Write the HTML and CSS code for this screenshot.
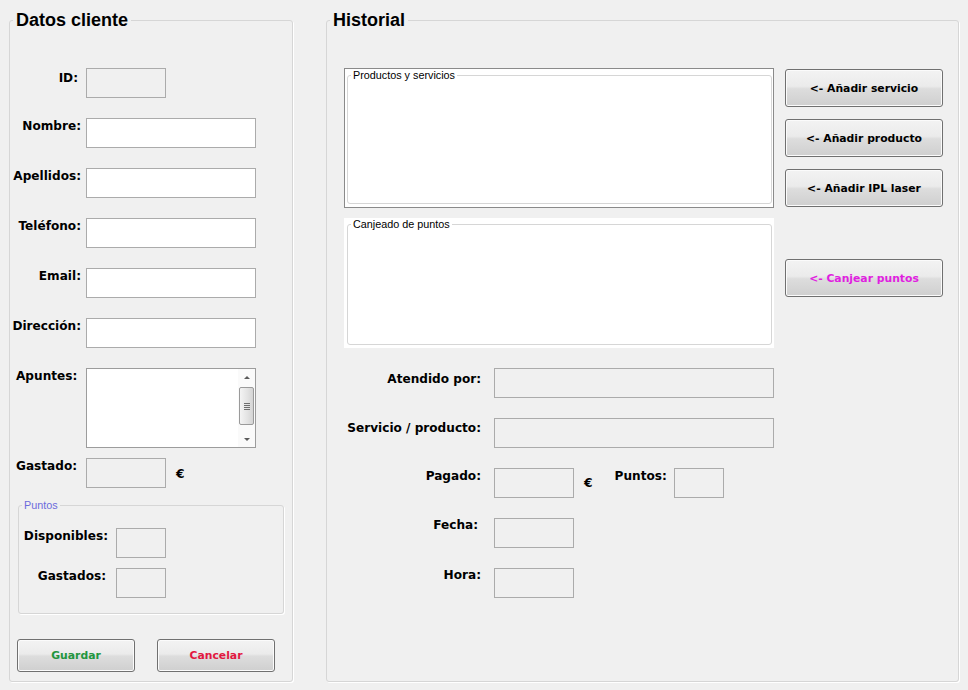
FILE: index.html
```html
<!DOCTYPE html>
<html lang="es">
<head>
<meta charset="utf-8">
<title>Cliente</title>
<link rel="stylesheet" href="styles.css">
</head>
<body>
<div class="window">
  <fieldset class="group group-client">
    <legend class="group-title">Datos cliente</legend>
    <div class="client-form">
      <div class="row"><span class="lbl lbl-id">ID:</span><input class="field w80" disabled></div>
      <div class="row"><span class="lbl">Nombre:</span><input class="field w170"></div>
      <div class="row"><span class="lbl">Apellidos:</span><input class="field w170"></div>
      <div class="row"><span class="lbl">Teléfono:</span><input class="field w170"></div>
      <div class="row"><span class="lbl">Email:</span><input class="field w170"></div>
      <div class="row"><span class="lbl">Dirección:</span><input class="field w170"></div>
      <div class="row row-notes"><span class="lbl lbl-left">Apuntes:</span>
        <div class="notes">
          <div class="scrollbar">
            <div class="sb-arrow"><span class="tri-up"></span></div>
            <div class="sb-thumb"><span class="grip"></span></div>
            <div class="sb-track"></div>
            <div class="sb-arrow"><span class="tri-down"></span></div>
          </div>
        </div>
      </div>
      <div class="row row-spent"><span class="lbl lbl-left">Gastado:</span><input class="field w80" disabled><span class="euro">€</span></div>

      <fieldset class="points">
        <legend class="small-title points-title">Puntos</legend>
        <div class="points-body">
          <div class="row"><span class="lbl">Disponibles:</span><input class="field w50" disabled></div>
          <div class="row"><span class="lbl lbl-used">Gastados:</span><input class="field w50" disabled></div>
        </div>
      </fieldset>

      <div class="actions">
        <button class="btn btn-action btn-save">Guardar</button>
        <button class="btn btn-action btn-cancel">Cancelar</button>
      </div>
    </div>
  </fieldset>

  <fieldset class="group group-history">
    <legend class="group-title">Historial</legend>
    <div class="history-top">
      <div class="lists">
        <div class="list list-framed">
          <fieldset class="inner">
            <legend class="small-title">Productos y servicios</legend>
          </fieldset>
        </div>
        <div class="list list-plain">
          <fieldset class="inner">
            <legend class="small-title">Canjeado de puntos</legend>
          </fieldset>
        </div>
      </div>
      <div class="side-buttons">
        <button class="btn btn-side">&lt;- Añadir servicio</button>
        <button class="btn btn-side">&lt;- Añadir producto</button>
        <button class="btn btn-side">&lt;- Añadir IPL laser</button>
        <button class="btn btn-side btn-redeem">&lt;- Canjear puntos</button>
      </div>
    </div>
    <div class="history-form">
      <div class="row"><span class="lbl pt4">Atendido por:</span><input class="field w280" disabled></div>
      <div class="row"><span class="lbl pt3">Servicio / producto:</span><input class="field w280" disabled></div>
      <div class="row"><span class="lbl">Pagado:</span><input class="field w80" disabled><span class="euro euro-paid">€</span><span class="lbl lbl-points">Puntos:</span><input class="field w50" disabled></div>
      <div class="row"><span class="lbl pt0 lbl-date">Fecha:</span><input class="field w80" disabled></div>
      <div class="row"><span class="lbl pt0">Hora:</span><input class="field w80" disabled></div>
    </div>
  </fieldset>
</div>
</body>
</html>
```

FILE: styles.css
```css
* { box-sizing: border-box; }

html, body {
  margin: 0;
  padding: 0;
  background: #f0f0f0;
}

body {
  width: 968px;
  height: 690px;
  overflow: hidden;
  font-family: "DejaVu Sans", sans-serif;
  color: #000;
}

.window {
  display: flex;
  gap: 33px;
  padding: 10px 0 0 9px;
}

/* Group boxes */
.group {
  margin: 0;
  padding: 0;
  min-width: 0;
  height: 672px;
  border: 1px solid #d6d6d6;
  border-radius: 3px;
  box-shadow: 1px 1px 0 #ffffff;
}

.group-client { width: 284px; }
.group-history { width: 633px; }

.group-title {
  margin-left: 3px;
  padding: 0 3px;
  font: bold 18px/20px "Liberation Sans", Arial, sans-serif;
}

.small-title {
  margin-left: 3px;
  padding: 0 2px;
  font: 10.8px/13px "Liberation Sans", Arial, sans-serif;
  color: #000;
}

/* Rows, labels, fields */
.row {
  display: flex;
  align-items: flex-start;
  height: 30px;
  margin-bottom: 20px;
}

.lbl {
  flex: none;
  font-weight: bold;
  font-size: 12.1px;
  line-height: 15px;
  padding-top: 1px;
  white-space: nowrap;
}

.field {
  display: block;
  flex: none;
  height: 30px;
  margin: 0;
  padding: 0 3px;
  border: 1px solid #ababab;
  background: #ffffff;
  outline: none;
  font: 12px "DejaVu Sans", sans-serif;
}

.field[disabled] { background: #f0f0f0; }

.w50 { width: 50px; }
.w80 { width: 80px; }
.w170 { width: 170px; }
.w280 { width: 280px; }

.euro {
  flex: none;
  margin-left: 10px;
  padding-top: 9px;
  font-weight: bold;
  font-size: 12.3px;
  line-height: 15px;
}

/* Left form */
.client-form { padding-top: 38px; }

.client-form .lbl {
  width: 76px;
  text-align: right;
  padding-right: 5px;
}

.client-form .lbl.lbl-id { padding-right: 8px; padding-top: 3px; }

.client-form .lbl.lbl-left {
  text-align: left;
  padding-left: 6px;
  padding-right: 0;
}

.row-notes { height: 80px; margin-bottom: 10px; }
.row-spent { margin-bottom: 11px; }

.notes {
  flex: none;
  width: 170px;
  height: 80px;
  border: 1px solid #9c9c9c;
  background: #ffffff;
  display: flex;
  justify-content: flex-end;
}

.scrollbar {
  width: 17px;
  height: 78px;
  display: flex;
  flex-direction: column;
  align-items: center;
  background: #fafafa;
}

.sb-arrow {
  height: 16px;
  width: 17px;
  display: flex;
  align-items: center;
  justify-content: center;
}

.tri-up {
  width: 0;
  height: 0;
  border-left: 3px solid transparent;
  border-right: 3px solid transparent;
  border-bottom: 3px solid #5a5a5a;
}

.tri-down {
  width: 0;
  height: 0;
  border-left: 3px solid transparent;
  border-right: 3px solid transparent;
  border-top: 3px solid #5a5a5a;
}

.sb-thumb {
  margin-top: 2px;
  width: 15px;
  height: 38px;
  border: 1px solid #9a9a9a;
  border-radius: 2px;
  background: linear-gradient(90deg, #f4f4f4, #e2e2e2 60%, #d4d4d4);
  display: flex;
  align-items: center;
  justify-content: center;
}

.grip {
  width: 6px;
  height: 7px;
  background: repeating-linear-gradient(#6e6e6e 0 1px, transparent 1px 2px);
}

.sb-track { flex: 1; }

/* Puntos sub-group */
.points {
  margin: 0 0 0 8px;
  padding: 0;
  min-width: 0;
  width: 266px;
  height: 115px;
  border: 1px solid #d6d6d6;
  border-radius: 3px;
  box-shadow: 1px 1px 0 #ffffff;
}

.points-title { color: #6b6bdc; }

.points-body { padding-top: 16px; }

.points .row { margin-bottom: 10px; }

.points .lbl {
  width: 97px;
  text-align: right;
  padding-right: 8px;
}

.points .lbl.lbl-used { padding-right: 10px; }

.actions {
  display: flex;
  gap: 22px;
  margin: 25px 0 0 7px;
}

/* Buttons */
.btn {
  margin: 0;
  padding: 0;
  border: 1px solid #707070;
  border-radius: 3px;
  background: linear-gradient(#f3f3f3 0%, #ebebeb 45%, #dddddd 52%, #cfcfcf 100%);
  box-shadow: inset 0 0 0 1px #fbfbfb;
  font: bold 10.8px "DejaVu Sans", sans-serif;
  color: #000;
  cursor: default;
}

.btn-action { width: 118px; height: 33px; }
.btn-save { color: #22963e; }
.btn-cancel { color: #e2173f; }

/* History */
.history-top {
  display: flex;
  gap: 11px;
  padding: 38px 0 0 17px;
}

.lists {
  width: 430px;
  display: flex;
  flex-direction: column;
  gap: 10px;
}

.list { background: #ffffff; }

.list-framed {
  height: 140px;
  border: 1px solid #8a8a8a;
  padding: 0 1px 3px 2px;
}

.list-plain {
  height: 130px;
  padding: 0 2px 3px 3px;
}

.inner {
  margin: 0;
  padding: 0;
  min-width: 0;
  height: 100%;
  border: 1px solid #d6d6d6;
  border-radius: 3px;
}

.side-buttons {
  width: 158px;
  display: flex;
  flex-direction: column;
  gap: 12px;
  padding-top: 1px;
}

.btn-side { width: 158px; height: 38px; }
.btn-redeem { margin-top: 40px; color: #e01fe0; }

.history-form { padding-top: 20px; }

.history-form .lbl {
  width: 167px;
  text-align: right;
  padding-right: 13px;
}

.history-form .lbl.pt4 { padding-top: 4px; }
.history-form .lbl.pt3 { padding-top: 3px; }
.history-form .lbl.pt0 { padding-top: 0; }
.history-form .lbl.lbl-date { padding-right: 16px; }

.history-form .euro-paid { padding-top: 8px; }

.history-form .lbl.lbl-points {
  width: auto;
  margin-left: 22px;
  padding-right: 7px;
}
```
